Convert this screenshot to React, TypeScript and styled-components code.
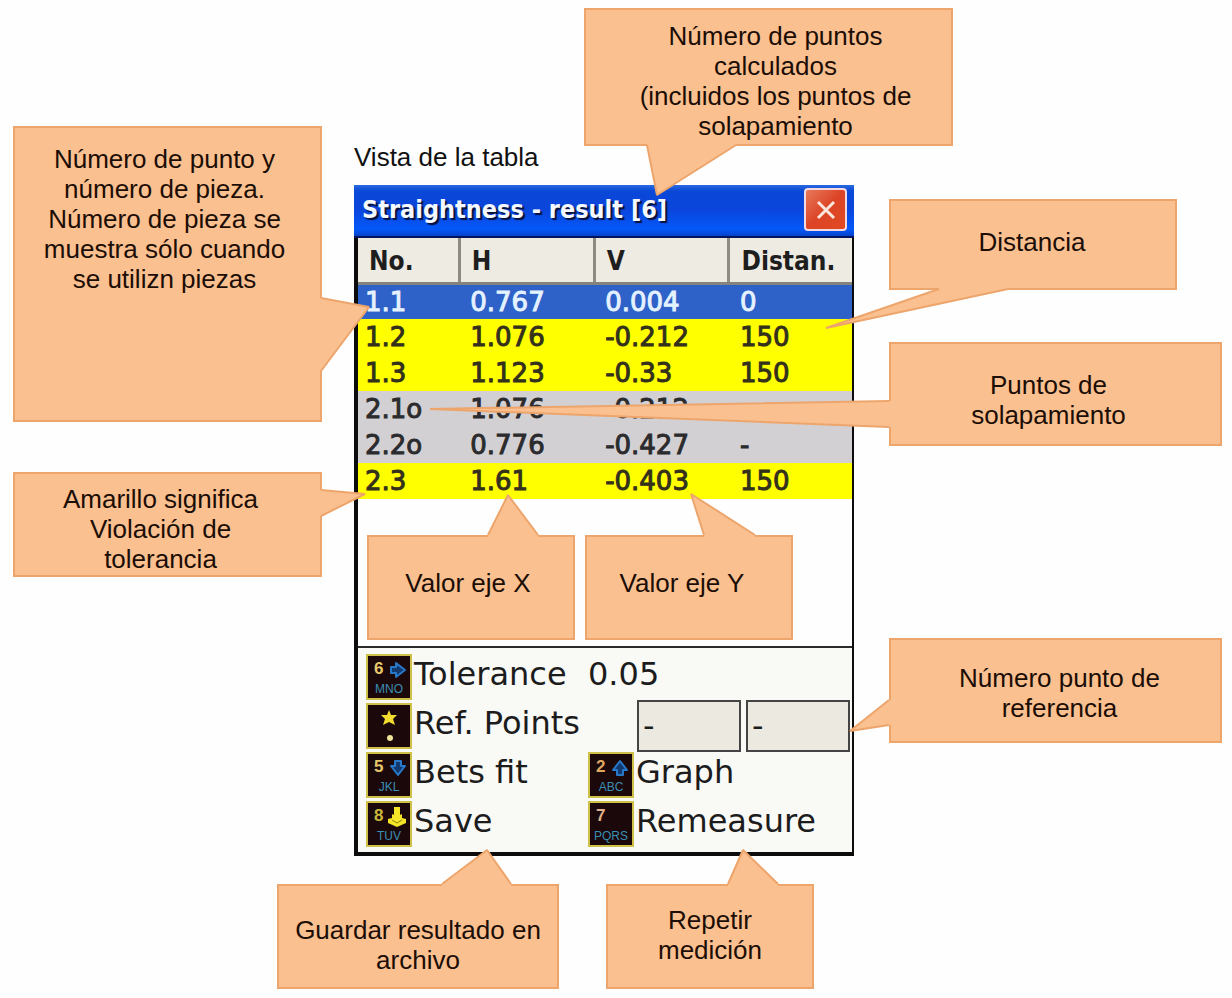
import React from 'react';
import styled, { createGlobalStyle } from 'styled-components';

const FILL = '#fac090';
const EDGE = '#eda56c';

const Global = createGlobalStyle`
  *, *::before, *::after { box-sizing: border-box; }
  body {
    margin: 0;
    background: #fefefe;
    color: #111;
    font-family: "Liberation Sans", Arial, sans-serif;
    font-size: 26px;
    line-height: 30px;
  }
`;

const Figure = styled.main`
  display: grid;
  grid-template-columns: minmax(0, 309fr) 32px 500px 35px minmax(0, 333fr);
  padding: 8px 10px 8px 13px;
`;

const LeftNotes = styled.div`
  grid-column: 1;
  position: relative;
  z-index: 1;
  display: flex;
  flex-direction: column;
  gap: 50px;
  padding-top: 118px;
`;

const Centre = styled.div`
  grid-column: 3;
  display: flex;
  flex-direction: column;
`;

const RightNotes = styled.div`
  grid-column: 5;
  position: relative;
  z-index: 1;
  display: flex;
  flex-direction: column;
  padding-top: 191px;
`;

const BottomNotes = styled.div`
  display: flex;
  gap: 47px;
  margin: 28px 0 0 -77px;
`;

const Caption = styled.h1`
  margin: -4px 0 0;
  padding: 0 0 13px;
  font-size: 26px;
  line-height: 30px;
  font-weight: 400;
`;

const Note = styled.aside<{ $w?: string; $h: number; $pad: string; $mt?: number; $ml?: number }>`
  position: relative;
  z-index: 1;
  flex: none;
  width: ${(p) => p.$w ?? '100%'};
  min-height: ${(p) => p.$h}px;
  margin-top: ${(p) => p.$mt ?? 0}px;
  margin-left: ${(p) => p.$ml ?? 0}px;
  padding: ${(p) => p.$pad};
  border: 2px solid ${EDGE};
  background: ${FILL};
  color: #1c0d05;
  font-family: "Liberation Sans", Arial, sans-serif;
  text-align: center;
  white-space: pre-line;
`;

const OverTable = styled.div`
  position: absolute;
  left: 9px;
  bottom: 6px;
  display: flex;
  gap: 10px;
`;

const TailSvg = styled.svg<{ $right?: boolean; $bottom?: boolean }>`
  position: absolute;
  ${(p) => (p.$right ? 'right: -2px;' : 'left: -2px;')}
  ${(p) => (p.$bottom ? 'bottom: -2px;' : 'top: -2px;')}
  width: 1px;
  height: 1px;
  overflow: visible;
  pointer-events: none;
`;

type Pt = [number, number];

/* Pointer of a note: two base points on the edge of the box and the tip. */
function Tail({ a, tip, b, right, bottom }: { a: Pt; tip: Pt; b: Pt; right?: boolean; bottom?: boolean }) {
  const vertical = a[1] === b[1];
  const inward = 3 * (vertical ? Math.sign(a[1] - tip[1]) : Math.sign(a[0] - tip[0]));
  const inner = (p: Pt): Pt => (vertical ? [p[0], p[1] + inward] : [p[0] + inward, p[1]]);
  return (
    <TailSvg $right={right} $bottom={bottom} aria-hidden="true">
      <polygon points={[inner(a), a, tip, b, inner(b)].join(' ')} fill={FILL} />
      <polyline points={[a, tip, b].join(' ')} fill="none" stroke={EDGE} strokeWidth="2" strokeLinejoin="bevel" />
    </TailSvg>
  );
}

const Device = styled.section`
  border: solid #0c0c0c;
  border-width: 0 2px 4px 4px;
  background: #fefefe;
  font-family: "DejaVu Sans", Verdana, sans-serif;
`;

const TitleBar = styled.header`
  display: flex;
  align-items: center;
  justify-content: space-between;
  height: 53px;
  margin: 0 -2px 0 -4px;
  padding: 0 7px 2px 8px;
  border-bottom: 2px solid #04145c;
  background: linear-gradient(#2a6ae0 0, #0a48d8 6px, #0b45dc 24px, #0458f8 44px, #0443cc);
`;

const Title = styled.h2`
  margin: 0;
  color: #f4f8ff;
  font-family: "DejaVu Sans Condensed", "DejaVu Sans", sans-serif;
  font-stretch: condensed;
  font-size: 25px;
  line-height: 30px;
  font-weight: 700;
  text-shadow: 2px 2px 1px #06103c;
  white-space: nowrap;
`;

const CloseButton = styled.button`
  width: 43px;
  height: 43px;
  padding: 0;
  border: 2px solid #f3d9e2;
  border-radius: 4px;
  background: linear-gradient(135deg, #e8795c, #dc4426 50%, #e04a20);
  svg { display: block; margin: auto; }
`;

const ListArea = styled.div`
  position: relative;
  height: 410px;
  border-bottom: 2px solid #2c2c2c;
`;

const ResultTable = styled.table`
  width: 100%;
  table-layout: fixed;
  border-collapse: collapse;
  font-size: 26px;
  line-height: 34px;
  color: #33301c;
`;

const HeadCell = styled.th`
  height: 45px;
  padding: 3px 0 0 11px;
  border-right: 3px solid #8d8b84;
  border-bottom: 3px solid #85837c;
  background: #eeebe3;
  color: #1e1e1e;
  font-family: "DejaVu Sans Condensed", "DejaVu Sans", sans-serif;
  font-stretch: condensed;
  font-size: 26px;
  font-weight: 700;
  text-align: left;
  &:last-child { border-right: 0; }
`;

type Tone = 'selected' | 'violation' | 'overlap';
const tones: Record<Tone, string> = {
  selected: 'background: #2f62c8; color: #e4f2ff;',
  violation: 'background: #ffff00;',
  overlap: 'background: #d3d0d3; color: #2b2b2e;',
};

const Row = styled.tr<{ $tone: Tone }>`
  ${(p) => tones[p.$tone]}
`;

const Cell = styled.td`
  height: 36px;
  padding: 0 0 0 11px;
  -webkit-text-stroke: 1px currentColor;
  &:first-child { padding-left: 7px; }
`;

const Panel = styled.div`
  display: grid;
  grid-template-columns: 222px 1fr;
  grid-auto-rows: 49px;
  padding: 4px 2px 4px 8px;
  background: #f9f9f6;
`;

const SoftKey = styled.button`
  display: flex;
  align-items: center;
  gap: 2px;
  padding: 0;
  border: 0;
  background: none;
  color: #1c1c1c;
  font-family: inherit;
  font-size: 32px;
  line-height: 36px;
  text-align: left;
  white-space: nowrap;
`;

const KeyLabel = styled.span`
  padding-bottom: 6px;
`;

const KeyCap = styled.span`
  display: grid;
  grid-template-columns: 1fr 1fr;
  grid-template-rows: 26px 14px;
  flex: none;
  width: 46px;
  height: 46px;
  padding: 1px 3px;
  border: 2px solid #cfc04a;
  background: #1b080a;
  svg { display: block; align-self: center; justify-self: center; }
`;

const Digit = styled.span<{ $color: string }>`
  padding-left: 3px;
  color: ${(p) => p.$color};
  font-family: "Liberation Sans", sans-serif;
  font-size: 17px;
  font-weight: 700;
  line-height: 24px;
`;

const Letters = styled.span`
  grid-column: 1 / 3;
  color: #3a8fb4;
  font-family: "Liberation Sans", sans-serif;
  font-size: 12px;
  line-height: 13px;
  text-align: center;
`;

const StarCap = styled.svg`
  grid-area: 1 / 1 / 3 / 3;
`;

const Output = styled.input`
  width: 200px;
  padding: 0 0 6px;
  border: 0;
  background: transparent;
  color: #1c1c1c;
  font-family: inherit;
  font-size: 32px;
`;

const RefFields = styled.div`
  display: flex;
  gap: 5px;
  align-self: center;
  padding-left: 49px;
`;

const RefInput = styled.input`
  width: 104px;
  height: 52px;
  padding: 0 4px;
  border: 2px solid #444;
  background: #ece9e0;
  color: #1c1c1c;
  font-family: inherit;
  font-size: 32px;
`;

function Arrow({ turn }: { turn: number }) {
  return (
    <svg width="18" height="18" viewBox="0 0 18 18" aria-hidden="true">
      <path
        d="M6 2h6v5h4l-7 9-7-9h4z"
        transform={`rotate(${turn} 9 9)`}
        fill="#123a70"
        stroke="#2878c8"
        strokeWidth="2"
        strokeLinejoin="round"
      />
    </svg>
  );
}

function SaveArrow() {
  return (
    <svg width="20" height="22" viewBox="0 0 20 22" aria-hidden="true">
      <path d="M7 1h6v8l2-1v4l4 1v4l-9 4-9-4v-4l4-1V8l2 1z" fill="#f4e528" />
      <path d="M5 14l5 3 5-3" fill="none" stroke="#8d8318" strokeWidth="1" />
    </svg>
  );
}

function Key({ digit, letters, color = '#e6c86a', children }: { digit: string; letters: string; color?: string; children?: React.ReactNode }) {
  return (
    <KeyCap>
      <Digit $color={color}>{digit}</Digit>
      {children ?? <span />}
      <Letters>{letters}</Letters>
    </KeyCap>
  );
}

const results: { cells: string[]; tone: Tone }[] = [
  { cells: ['1.1', '0.767', '0.004', '0'], tone: 'selected' },
  { cells: ['1.2', '1.076', '-0.212', '150'], tone: 'violation' },
  { cells: ['1.3', '1.123', '-0.33', '150'], tone: 'violation' },
  { cells: ['2.1o', '1.076', '-0.212', '-'], tone: 'overlap' },
  { cells: ['2.2o', '0.776', '-0.427', '-'], tone: 'overlap' },
  { cells: ['2.3', '1.61', '-0.403', '150'], tone: 'violation' },
];

export default function App() {
  return (
    <>
      <Global />
      <Figure>
        <LeftNotes>
          <Note $h={296} $pad="16px 6px 0 0">
            {'Número de punto y\nnúmero de pieza.\nNúmero de pieza se\nmuestra sólo cuando\nse utilizn piezas'}
            <Tail right a={[0, 172]} tip={[48, 181]} b={[0, 245]} />
          </Note>
          <Note $h={105} $pad="10px 14px 0 0">
            {'Amarillo significa\nViolación de\ntolerancia'}
            <Tail right a={[0, 18]} tip={[44, 22]} b={[0, 44]} />
          </Note>
        </LeftNotes>

        <Centre>
          <Note $w="369px" $h={138} $ml={230} $pad="11px 0 0 14px">
            {'Número de puntos\ncalculados\n(incluidos los puntos de\nsolapamiento'}
            <Tail bottom a={[63, 0]} tip={[73, 50]} b={[152, 0]} />
          </Note>
          <Caption>Vista de la tabla</Caption>

          <Device>
            <TitleBar>
              <Title>Straightness - result [6]</Title>
              <CloseButton aria-label="Close">
                <svg width="22" height="22" viewBox="0 0 22 22" aria-hidden="true">
                  <path d="M3 3l16 16M19 3L3 19" stroke="#fbe6dc" strokeWidth="3" />
                </svg>
              </CloseButton>
            </TitleBar>

            <ListArea>
              <ResultTable>
                <colgroup>
                  <col style={{ width: '20.5%' }} />
                  <col style={{ width: '27.3%' }} />
                  <col style={{ width: '27.3%' }} />
                  <col />
                </colgroup>
                <thead>
                  <tr>
                    <HeadCell scope="col">No.</HeadCell>
                    <HeadCell scope="col">H</HeadCell>
                    <HeadCell scope="col">V</HeadCell>
                    <HeadCell scope="col">Distan.</HeadCell>
                  </tr>
                </thead>
                <tbody>
                  {results.map((r) => (
                    <Row key={r.cells[0]} $tone={r.tone}>
                      {r.cells.map((c, i) => (
                        <Cell key={i}>{c}</Cell>
                      ))}
                    </Row>
                  ))}
                </tbody>
              </ResultTable>
              <OverTable>
                <Note $w="208px" $h={105} $pad="31px 6px 0 0">
                  Valor eje X
                  <Tail a={[121, 0]} tip={[141, -40]} b={[171, 0]} />
                </Note>
                <Note $w="208px" $h={105} $pad="31px 14px 0 0">
                  Valor eje Y
                  <Tail a={[119, 0]} tip={[106, -41]} b={[170, 0]} />
                </Note>
              </OverTable>
            </ListArea>

            <Panel>
              <SoftKey as="label" htmlFor="tolerance">
                <Key digit="6" letters="MNO"><Arrow turn={-90} /></Key>
                <KeyLabel>Tolerance</KeyLabel>
              </SoftKey>
              <Output id="tolerance" defaultValue="0.05" />
              <SoftKey>
                <KeyCap>
                  <StarCap width="36" height="40" viewBox="0 0 36 40" aria-hidden="true">
                    <path d="M18 4l2 5h6l-4 4 2 6-6-3-6 3 2-6-4-4h6z" fill="#f3dc30" />
                    <circle cx="19" cy="32" r="3" fill="#f0e39a" />
                  </StarCap>
                </KeyCap>
                <KeyLabel>Ref. Points</KeyLabel>
              </SoftKey>
              <RefFields>
                <RefInput aria-label="Ref. point 1" defaultValue="-" />
                <RefInput aria-label="Ref. point 2" defaultValue="-" />
              </RefFields>
              <SoftKey>
                <Key digit="5" letters="JKL"><Arrow turn={0} /></Key>
                <KeyLabel>Bets fit</KeyLabel>
              </SoftKey>
              <SoftKey>
                <Key digit="2" letters="ABC" color="#dfa860"><Arrow turn={180} /></Key>
                <KeyLabel>Graph</KeyLabel>
              </SoftKey>
              <SoftKey>
                <Key digit="8" letters="TUV" color="#c9b83c"><SaveArrow /></Key>
                <KeyLabel>Save</KeyLabel>
              </SoftKey>
              <SoftKey>
                <Key digit="7" letters="PQRS" color="#e0b088" />
                <KeyLabel>Remeasure</KeyLabel>
              </SoftKey>
            </Panel>
          </Device>

          <BottomNotes>
            <Note $w="282px" $h={105} $pad="29px 0 0">
              {'Guardar resultado en\narchivo'}
              <Tail a={[165, 0]} tip={[210, -34]} b={[234, 0]} />
            </Note>
            <Note $w="208px" $h={105} $pad="19px 0 0">
              {'Repetir\nmedición'}
              <Tail a={[122, 0]} tip={[137, -34]} b={[172, 0]} />
            </Note>
          </BottomNotes>
        </Centre>

        <RightNotes>
          <Note $w="calc(100% - 45px)" $h={91} $pad="26px 2px 0 0">
            Distancia
            <Tail bottom a={[50, 0]} tip={[-63, 39]} b={[119, 0]} />
          </Note>
          <Note $h={104} $mt={52} $pad="26px 14px 0 0">
            {'Puntos de\nsolapamiento'}
            <Tail a={[0, 59]} tip={[-459, 67]} b={[0, 85]} />
          </Note>
          <Note $h={105} $mt={192} $pad="23px 0 0 8px">
            {'Número punto de\nreferencia'}
            <Tail a={[0, 62]} tip={[-39, 93]} b={[0, 87]} />
          </Note>
        </RightNotes>
      </Figure>
    </>
  );
}
